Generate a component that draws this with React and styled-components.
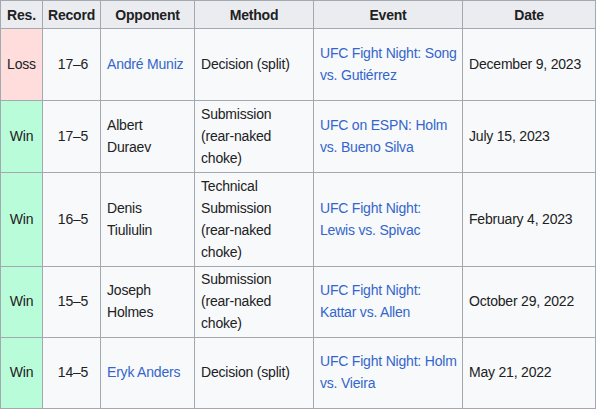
import React from 'react';
import styled, { createGlobalStyle } from 'styled-components';

const GlobalStyle = createGlobalStyle`
  body { margin:0; background:#fff; font-family:"Liberation Sans", Arial, sans-serif; color:#202122; }
`

const Table = styled.table`
  border-collapse:collapse; table-layout:fixed; width:595px;
  font-size:14px; line-height:22px; letter-spacing:-0.2px;
  background:#f8f9fa; color:#202122;
  border:1px solid #a2a9b1;
`

const HeadCell = styled.th`
  background:#eaecf0; border:1px solid #a2a9b1; font-weight:bold;
  text-align:center; padding:0 4px; height:27px;
`

const Row = styled.tr`
  height:${p => p.$h}px;
`

const Cell = styled.td`
  border:1px solid #a2a9b1; padding:0 3px 2px 6px; vertical-align:middle;
  white-space:nowrap;
  text-align:${p => p.$center ? 'center' : 'left'};
`

const ResultCell = styled(Cell)`
  background:${p => p.$result === 'Loss' ? '#ffdddd' : '#b9fcd9'};
  text-align:center; padding:0 4px 2px;
`

const WikiLink = styled.a`
  color:#3366cc; text-decoration:none;
`

const cols = [42, 58, 94, 119, 149, 133]

const fights = [
  { res:'Loss', rec:'17–6', opp:['André Muniz'], oppLink:true, method:['Decision (split)'], event:['UFC Fight Night: Song', 'vs. Gutiérrez'], date:'December 9, 2023', h:72 },
  { res:'Win', rec:'17–5', opp:['Albert', 'Duraev'], method:['Submission', '(rear-naked', 'choke)'], event:['UFC on ESPN: Holm', 'vs. Bueno Silva'], date:'July 15, 2023', h:72 },
  { res:'Win', rec:'16–5', opp:['Denis', 'Tiuliulin'], method:['Technical', 'Submission', '(rear-naked', 'choke)'], event:['UFC Fight Night:', 'Lewis vs. Spivac'], date:'February 4, 2023', h:94 },
  { res:'Win', rec:'15–5', opp:['Joseph', 'Holmes'], method:['Submission', '(rear-naked', 'choke)'], event:['UFC Fight Night:', 'Kattar vs. Allen'], date:'October 29, 2022', h:71 },
  { res:'Win', rec:'14–5', opp:['Eryk Anders'], oppLink:true, method:['Decision (split)'], event:['UFC Fight Night: Holm', 'vs. Vieira'], date:'May 21, 2022', h:71 },
]

const Lines = ({ lines }) => lines.map((l, i) => (
  <React.Fragment key={i}>{i > 0 && <br />}{l}</React.Fragment>
))

const App = () => {
  return (
    <>
      <GlobalStyle />
      <Table>
        <colgroup>
          {cols.map((w, i) => <col key={i} style={{ width: w }} />)}
        </colgroup>
        <thead>
          <tr>
            <HeadCell>Res.</HeadCell>
            <HeadCell>Record</HeadCell>
            <HeadCell>Opponent</HeadCell>
            <HeadCell>Method</HeadCell>
            <HeadCell>Event</HeadCell>
            <HeadCell>Date</HeadCell>
          </tr>
        </thead>
        <tbody>
          {fights.map(f => (
            <Row key={f.rec} $h={f.h}>
              <ResultCell $result={f.res}>{f.res}</ResultCell>
              <Cell $center>{f.rec}</Cell>
              <Cell>{f.oppLink ? <WikiLink href="#"><Lines lines={f.opp} /></WikiLink> : <Lines lines={f.opp} />}</Cell>
              <Cell><Lines lines={f.method} /></Cell>
              <Cell><WikiLink href="#"><Lines lines={f.event} /></WikiLink></Cell>
              <Cell>{f.date}</Cell>
            </Row>
          ))}
        </tbody>
      </Table>
    </>
  );
};

export default App;
